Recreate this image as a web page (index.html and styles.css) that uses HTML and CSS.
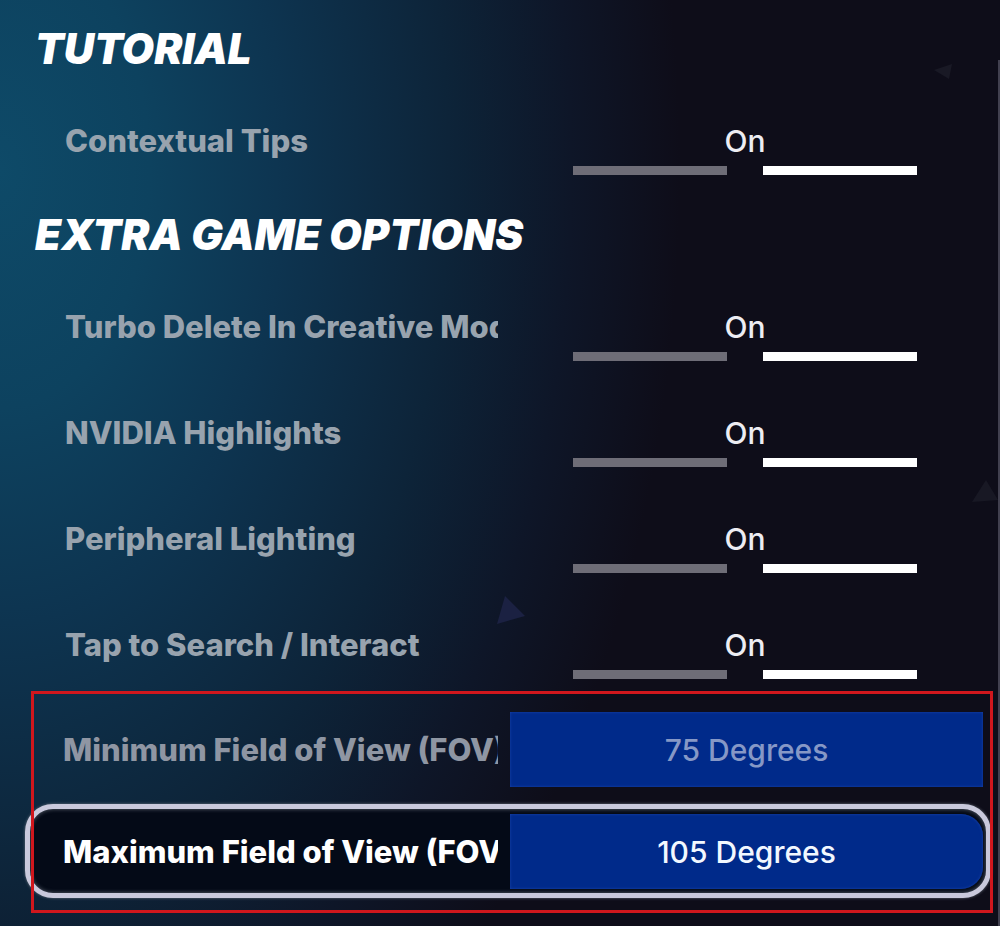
FILE: index.html
```html
<!DOCTYPE html>
<html lang="en">
<head>
    <meta charset="UTF-8">
    <meta name="viewport" content="width=device-width, initial-scale=1.0">
    <title>Game Settings</title>
    <link rel="stylesheet" href="styles.css">
</head>
<body>

    <!-- Background particles -->
    <svg class="particle particle-center" viewBox="0 0 28 28" aria-hidden="true"><path d="M8 0 L28 20 L0 28 Z"/></svg>
    <svg class="particle particle-top" viewBox="0 0 28 28" aria-hidden="true"><path d="M0 11 L18 5 L15 20 Z"/></svg>
    <svg class="particle particle-right" viewBox="0 0 28 28" aria-hidden="true"><path d="M14 2 L26 22 L0 24 Z"/></svg>
    <div class="scrollbar"></div>

    <main class="settings">
        <section>
            <h2>Tutorial</h2>
            <div class="setting-list">
                <div class="setting-row">
                    <label class="setting-label" for="contextualTips">Contextual Tips</label>
                    <button class="toggle" id="contextualTips" type="button">
                        <span class="toggle-text">On</span>
                        <span class="bar"></span>
                        <span class="bar active"></span>
                    </button>
                </div>
            </div>
        </section>

        <section>
            <h2>Extra Game Options</h2>
            <div class="setting-list">
                <div class="setting-row">
                    <label class="setting-label" for="turboDelete">Turbo Delete In Creative Mode</label>
                    <button class="toggle" id="turboDelete" type="button">
                        <span class="toggle-text">On</span>
                        <span class="bar"></span>
                        <span class="bar active"></span>
                    </button>
                </div>
                <div class="setting-row">
                    <label class="setting-label" for="nvidiaHighlights">NVIDIA Highlights</label>
                    <button class="toggle" id="nvidiaHighlights" type="button">
                        <span class="toggle-text">On</span>
                        <span class="bar"></span>
                        <span class="bar active"></span>
                    </button>
                </div>
                <div class="setting-row">
                    <label class="setting-label" for="peripheralLighting">Peripheral Lighting</label>
                    <button class="toggle" id="peripheralLighting" type="button">
                        <span class="toggle-text">On</span>
                        <span class="bar"></span>
                        <span class="bar active"></span>
                    </button>
                </div>
                <div class="setting-row">
                    <label class="setting-label" for="tapSearch">Tap to Search / Interact</label>
                    <button class="toggle" id="tapSearch" type="button">
                        <span class="toggle-text">On</span>
                        <span class="bar"></span>
                        <span class="bar active"></span>
                    </button>
                </div>
            </div>
        </section>

        <!-- Field of view values -->
        <section class="fov">
            <div class="fov-row">
                <label class="setting-label" for="minFov">Minimum Field of View (FOV)</label>
                <button class="fov-value" id="minFov" type="button">75 Degrees</button>
            </div>
            <div class="fov-row selected">
                <label class="setting-label" for="maxFov">Maximum Field of View (FOV)</label>
                <button class="fov-value" id="maxFov" type="button">105 Degrees</button>
            </div>
        </section>
    </main>

</body>
</html>
```
FILE: styles.css
```css
* {
    box-sizing: border-box;
}

body {
    position: relative;
    min-height: 100vh;
    margin: 0;
    overflow-x: hidden;
    font-family: Inter, "Liberation Sans", sans-serif;
    font-size: 30px;
    line-height: 36px;
    color: #fff;
    background: radial-gradient(ellipse 680px 1080px at 0 170px, #0e4a68 0%, #0d425f 22%, #0d3450 42%, #0d2439 66%, #0e1628 84%, #0e0d19 100%) #0e0d19;
}

button {
    border: none;
    padding: 0;
    font: inherit;
    font-weight: 500;
    cursor: pointer;
}

.settings {
    position: relative;
    display: flex;
    flex-direction: column;
    padding-top: 25px;
}

h2 {
    margin: 0 0 50px;
    padding-left: 35px;
    font-size: 42px;
    font-weight: 900;
    font-style: italic;
    line-height: 48px;
    text-transform: uppercase;
}

.setting-list {
    display: flex;
    flex-direction: column;
    gap: 54px;
    padding: 0 17px 0 65px;
    margin-bottom: 36px;
}

.setting-row {
    display: grid;
    grid-template-columns: minmax(0, 433fr) minmax(0, 473fr);
    gap: 12px;
}

.setting-label {
    overflow: hidden;
    white-space: nowrap;
    font-size: 31px;
    font-weight: 800;
    color: #98a3ae;
}

/* On/off switch with one bar per state */
.toggle {
    display: grid;
    grid-template-columns: 1fr 1fr;
    gap: 7px 36px;
    margin: 0 66px 0 63px;
    background: none;
    color: #ededf3;
}

.toggle-text {
    grid-column: 1 / -1;
}

.bar {
    height: 9px;
    background-color: #6e6d77;
}

.bar.active {
    background-color: #fff;
}

.fov {
    position: relative;
    display: flex;
    flex-direction: column;
    gap: 27px;
    margin: -24px 7px 0 31px;
    padding: 21px 0 24px;
}

/* Red frame drawn over the rows */
.fov::after {
    content: "";
    position: absolute;
    inset: 0;
    border: 3px solid #d0171d;
    pointer-events: none;
}

.fov-row {
    position: relative;
    display: grid;
    grid-template-columns: minmax(0, 435fr) minmax(0, 473fr);
    align-items: center;
    gap: 12px;
    padding: 0 10px 0 32px;
}

.fov-row .setting-label,
.fov-value {
    position: relative;
}

.fov-row .setting-label {
    color: #8f96a3;
}

.fov-value {
    height: 75px;
    background-color: #002a8a;
    box-shadow: inset 0 0 3px #1a44ab;
    color: #8698c6;
}

.selected::before {
    content: "";
    position: absolute;
    inset: -10px 2px -9px -6px;
    border: 5px solid #c9c9dc;
    border-radius: 28px;
    background-color: #040a17;
    box-shadow: 0 0 3px #6c7480, inset 0 0 4px #5c6470;
}

.fov-row.selected .setting-label {
    color: #fff;
}

.selected .fov-value {
    border-radius: 0 22px 22px 0;
    color: #f2f8ff;
}

.scrollbar {
    position: absolute;
    top: 60px;
    right: 0;
    bottom: 0;
    width: 2px;
    background-color: #41404f;
}

.particle {
    position: absolute;
    width: 28px;
    height: 28px;
    fill: #1b2142;
}

.particle-center {
    top: 596px;
    left: 497px;
}

.particle-top {
    top: 59px;
    right: 38px;
    fill: #191925;
}

.particle-right {
    top: 478px;
    right: 0;
    fill: #181824;
}
```
